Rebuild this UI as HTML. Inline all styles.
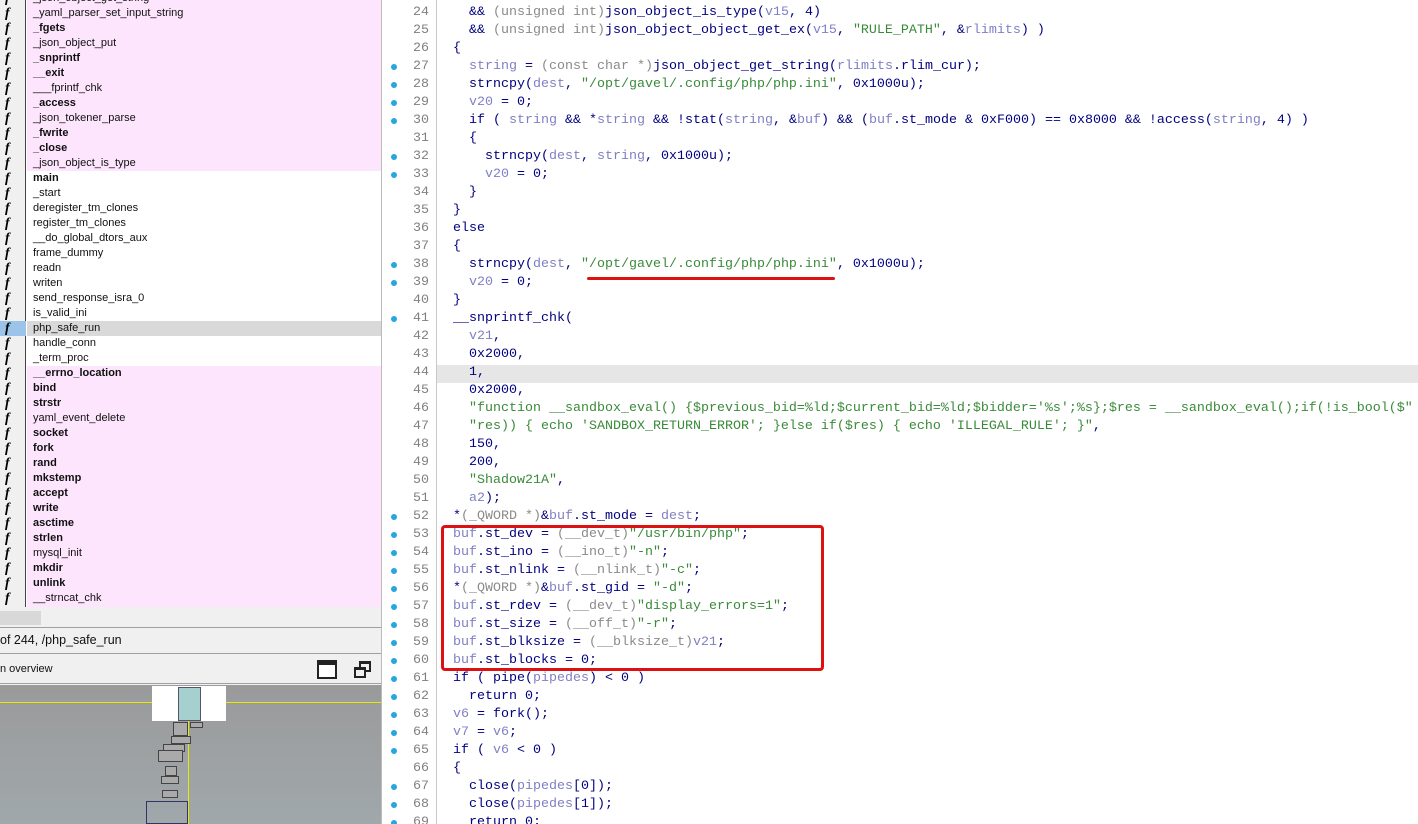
<!DOCTYPE html>
<html><head><meta charset="utf-8"><style>
*{margin:0;padding:0;box-sizing:border-box}
body{width:1418px;height:824px;overflow:hidden;background:#fff;font-family:"Liberation Sans",sans-serif;position:relative}
#left{position:absolute;left:0;top:0;width:381px;height:824px;background:#f0f0f0;overflow:hidden}
#list{position:absolute;left:0;top:0;width:381px;height:607px;overflow:hidden;background:#fff}
.icons{position:absolute;left:0;top:0;width:26px;height:607px;background:#f0f0f0;border-right:1px solid #444}
.row{position:absolute;left:27px;width:354px;height:15px;font-size:11px;line-height:15px;padding-left:6px;color:#111;white-space:nowrap}
.p{background:#fde6fd}
.b{font-weight:bold}
.sel{background:#d9d9d9}
.ic{position:absolute;left:5px;width:16px;height:15px;font:italic bold 14px/15px "Liberation Serif",serif;color:#000}
#right{position:absolute;left:381px;top:0;width:1037px;height:824px;border-left:1px solid #bbb;overflow:hidden;background:#fff}
.gut{position:absolute;left:54px;top:0;width:1px;height:824px;background:#c8c8c8}
.ln{position:absolute;left:0;width:1037px;height:18px;font-family:"Liberation Mono",monospace;font-size:13.33px;line-height:18px;white-space:pre;color:#000080}
.num{position:absolute;left:14px;width:33px;text-align:right;color:#808080}
.code{position:absolute;left:71px}
.dot{position:absolute;left:9px;top:6px;width:6px;height:6px;border-radius:3px;background:#27a6e0}
.v{color:#7f7fc4}.s{color:#3a8a3a}.c{color:#8a8a8a}
.hl{background:#e6e6e6}
</style></head><body>
<div id="left">
<div id="list">
<div class="icons"></div>
<div class="row p" style="top:-9px">_json_object_get_string</div>
<div class="row p" style="top:6px">_yaml_parser_set_input_string</div>
<div class="row p b" style="top:21px">_fgets</div>
<div class="row p" style="top:36px">_json_object_put</div>
<div class="row p b" style="top:51px">_snprintf</div>
<div class="row p b" style="top:66px">__exit</div>
<div class="row p" style="top:81px">___fprintf_chk</div>
<div class="row p b" style="top:96px">_access</div>
<div class="row p" style="top:111px">_json_tokener_parse</div>
<div class="row p b" style="top:126px">_fwrite</div>
<div class="row p b" style="top:141px">_close</div>
<div class="row p" style="top:156px">_json_object_is_type</div>
<div class="row b" style="top:171px">main</div>
<div class="row" style="top:186px">_start</div>
<div class="row" style="top:201px">deregister_tm_clones</div>
<div class="row" style="top:216px">register_tm_clones</div>
<div class="row" style="top:231px">__do_global_dtors_aux</div>
<div class="row" style="top:246px">frame_dummy</div>
<div class="row" style="top:261px">readn</div>
<div class="row" style="top:276px">writen</div>
<div class="row" style="top:291px">send_response_isra_0</div>
<div class="row" style="top:306px">is_valid_ini</div>
<div class="row sel" style="top:321px">php_safe_run</div>
<div class="row" style="top:336px">handle_conn</div>
<div class="row" style="top:351px">_term_proc</div>
<div class="row p b" style="top:366px">__errno_location</div>
<div class="row p b" style="top:381px">bind</div>
<div class="row p b" style="top:396px">strstr</div>
<div class="row p" style="top:411px">yaml_event_delete</div>
<div class="row p b" style="top:426px">socket</div>
<div class="row p b" style="top:441px">fork</div>
<div class="row p b" style="top:456px">rand</div>
<div class="row p b" style="top:471px">mkstemp</div>
<div class="row p b" style="top:486px">accept</div>
<div class="row p b" style="top:501px">write</div>
<div class="row p b" style="top:516px">asctime</div>
<div class="row p b" style="top:531px">strlen</div>
<div class="row p" style="top:546px">mysql_init</div>
<div class="row p b" style="top:561px">mkdir</div>
<div class="row p b" style="top:576px">unlink</div>
<div class="row p" style="top:591px">__strncat_chk</div>
<div class="row p" style="top:606px">_</div>
<div style="position:absolute;left:0;top:321px;width:26px;height:15px;background:#9cc4e8"></div>
<div class="ic" style="top:-9px">f</div><div class="ic" style="top:6px">f</div><div class="ic" style="top:21px">f</div><div class="ic" style="top:36px">f</div><div class="ic" style="top:51px">f</div><div class="ic" style="top:66px">f</div><div class="ic" style="top:81px">f</div><div class="ic" style="top:96px">f</div><div class="ic" style="top:111px">f</div><div class="ic" style="top:126px">f</div><div class="ic" style="top:141px">f</div><div class="ic" style="top:156px">f</div><div class="ic" style="top:171px">f</div><div class="ic" style="top:186px">f</div><div class="ic" style="top:201px">f</div><div class="ic" style="top:216px">f</div><div class="ic" style="top:231px">f</div><div class="ic" style="top:246px">f</div><div class="ic" style="top:261px">f</div><div class="ic" style="top:276px">f</div><div class="ic" style="top:291px">f</div><div class="ic" style="top:306px">f</div><div class="ic" style="top:321px">f</div><div class="ic" style="top:336px">f</div><div class="ic" style="top:351px">f</div><div class="ic" style="top:366px">f</div><div class="ic" style="top:381px">f</div><div class="ic" style="top:396px">f</div><div class="ic" style="top:411px">f</div><div class="ic" style="top:426px">f</div><div class="ic" style="top:441px">f</div><div class="ic" style="top:456px">f</div><div class="ic" style="top:471px">f</div><div class="ic" style="top:486px">f</div><div class="ic" style="top:501px">f</div><div class="ic" style="top:516px">f</div><div class="ic" style="top:531px">f</div><div class="ic" style="top:546px">f</div><div class="ic" style="top:561px">f</div><div class="ic" style="top:576px">f</div><div class="ic" style="top:591px">f</div>
</div>
<div style="position:absolute;left:0;top:610px;width:381px;height:17px;background:#f0f0f0"></div>
<div style="position:absolute;left:0;top:611px;width:41px;height:14px;background:#d8d8d8"></div>
<div style="position:absolute;left:0;top:627px;width:381px;height:1px;background:#a0a0a0"></div>
<div style="position:absolute;left:0;top:628px;width:381px;height:25px;font-size:12.5px;line-height:25px;color:#111">of 244, /php_safe_run</div>
<div style="position:absolute;left:0;top:653px;width:381px;height:1px;background:#a0a0a0"></div>
<div style="position:absolute;left:0;top:655px;width:381px;height:28px;font-size:11px;line-height:28px;color:#111">n overview</div>
<div style="position:absolute;left:317px;top:660px;width:20px;height:19px;border:2px solid #222;border-top-width:5px;background:#fff"></div>
<div style="position:absolute;left:359px;top:661px;width:12px;height:11px;border:2px solid #222;border-top-width:3px"></div>
<div style="position:absolute;left:354px;top:667px;width:12px;height:11px;border:2px solid #222;border-top-width:3px;background:#f0f0f0"></div>
<div style="position:absolute;left:0;top:683px;width:381px;height:1px;background:#a0a0a0"></div>
<div style="position:absolute;left:0;top:685px;width:381px;height:139px;background:linear-gradient(#9a9a9a,#a0a8ab)"></div>
<div style="position:absolute;left:0;top:702px;width:381px;height:1px;background:#e8e800"></div>
<div style="position:absolute;left:152px;top:686px;width:74px;height:35px;background:#fff"></div>
<div style="position:absolute;left:178px;top:687px;width:23px;height:34px;background:#a6d0d0;border:1px solid #556"></div>
<div style="position:absolute;left:188px;top:721px;width:1px;height:103px;background:#e8e800"></div>
<div style="position:absolute;left:173px;top:722px;width:15px;height:14px;border:1px solid #444;background:#aaa"></div>
<div style="position:absolute;left:190px;top:722px;width:13px;height:6px;border:1px solid #444;background:#aaa"></div>
<div style="position:absolute;left:171px;top:736px;width:20px;height:8px;border:1px solid #444;background:#aaa"></div>
<div style="position:absolute;left:163px;top:744px;width:22px;height:8px;border:1px solid #444;background:#aaa"></div>
<div style="position:absolute;left:158px;top:750px;width:25px;height:12px;border:1px solid #444;background:#aaa"></div>
<div style="position:absolute;left:165px;top:766px;width:12px;height:10px;border:1px solid #444;background:#aaa"></div>
<div style="position:absolute;left:161px;top:776px;width:18px;height:8px;border:1px solid #444;background:#aaa"></div>
<div style="position:absolute;left:162px;top:790px;width:16px;height:8px;border:1px solid #444;background:#aaa"></div>
<div style="position:absolute;left:146px;top:801px;width:42px;height:23px;border:1px solid #336"></div>
</div>

<div id="right">
<div class="gut"></div>
<div class="ln hl" style="top:365px;left:55px"></div>
<div style="position:absolute;left:59px;top:525px;width:383px;height:146px;border:3px solid #dd1111;border-radius:4px;z-index:2"></div>
<div style="position:absolute;left:205px;top:277px;width:248px;height:3px;background:#dd1111;border-radius:2px;z-index:2"></div>

<div class="ln" style="top:-14px"><span class="num">23</span><span class="code">  (</span></div>
<div class="ln" style="top:4px"><span class="num">24</span><span class="code">  &amp;&amp; <span class="c">(unsigned int)</span>json_object_is_type(<span class="v">v15</span>, 4)</span></div>
<div class="ln" style="top:22px"><span class="num">25</span><span class="code">  &amp;&amp; <span class="c">(unsigned int)</span>json_object_object_get_ex(<span class="v">v15</span>, <span class="s">"RULE_PATH"</span>, &amp;<span class="v">rlimits</span>) )</span></div>
<div class="ln" style="top:40px"><span class="num">26</span><span class="code">{</span></div>
<div class="ln" style="top:58px"><i class="dot"></i><span class="num">27</span><span class="code">  <span class="v">string</span> = <span class="c">(const char *)</span>json_object_get_string(<span class="v">rlimits</span>.rlim_cur);</span></div>
<div class="ln" style="top:76px"><i class="dot"></i><span class="num">28</span><span class="code">  strncpy(<span class="v">dest</span>, <span class="s">"/opt/gavel/.config/php/php.ini"</span>, 0x1000u);</span></div>
<div class="ln" style="top:94px"><i class="dot"></i><span class="num">29</span><span class="code">  <span class="v">v20</span> = 0;</span></div>
<div class="ln" style="top:112px"><i class="dot"></i><span class="num">30</span><span class="code">  if ( <span class="v">string</span> &amp;&amp; *<span class="v">string</span> &amp;&amp; !stat(<span class="v">string</span>, &amp;<span class="v">buf</span>) &amp;&amp; (<span class="v">buf</span>.st_mode &amp; 0xF000) == 0x8000 &amp;&amp; !access(<span class="v">string</span>, 4) )</span></div>
<div class="ln" style="top:130px"><span class="num">31</span><span class="code">  {</span></div>
<div class="ln" style="top:148px"><i class="dot"></i><span class="num">32</span><span class="code">    strncpy(<span class="v">dest</span>, <span class="v">string</span>, 0x1000u);</span></div>
<div class="ln" style="top:166px"><i class="dot"></i><span class="num">33</span><span class="code">    <span class="v">v20</span> = 0;</span></div>
<div class="ln" style="top:184px"><span class="num">34</span><span class="code">  }</span></div>
<div class="ln" style="top:202px"><span class="num">35</span><span class="code">}</span></div>
<div class="ln" style="top:220px"><span class="num">36</span><span class="code">else</span></div>
<div class="ln" style="top:238px"><span class="num">37</span><span class="code">{</span></div>
<div class="ln" style="top:256px"><i class="dot"></i><span class="num">38</span><span class="code">  strncpy(<span class="v">dest</span>, <span class="s">"/opt/gavel/.config/php/php.ini"</span>, 0x1000u);</span></div>
<div class="ln" style="top:274px"><i class="dot"></i><span class="num">39</span><span class="code">  <span class="v">v20</span> = 0;</span></div>
<div class="ln" style="top:292px"><span class="num">40</span><span class="code">}</span></div>
<div class="ln" style="top:310px"><i class="dot"></i><span class="num">41</span><span class="code">__snprintf_chk(</span></div>
<div class="ln" style="top:328px"><span class="num">42</span><span class="code">  <span class="v">v21</span>,</span></div>
<div class="ln" style="top:346px"><span class="num">43</span><span class="code">  0x2000,</span></div>
<div class="ln" style="top:364px"><span class="num">44</span><span class="code">  1,</span></div>
<div class="ln" style="top:382px"><span class="num">45</span><span class="code">  0x2000,</span></div>
<div class="ln" style="top:400px"><span class="num">46</span><span class="code">  <span class="s">"function __sandbox_eval() {$previous_bid=%ld;$current_bid=%ld;$bidder='%s';%s};$res = __sandbox_eval();if(!is_bool($"</span></span></div>
<div class="ln" style="top:418px"><span class="num">47</span><span class="code">  <span class="s">"res)) { echo 'SANDBOX_RETURN_ERROR'; }else if($res) { echo 'ILLEGAL_RULE'; }"</span>,</span></div>
<div class="ln" style="top:436px"><span class="num">48</span><span class="code">  150,</span></div>
<div class="ln" style="top:454px"><span class="num">49</span><span class="code">  200,</span></div>
<div class="ln" style="top:472px"><span class="num">50</span><span class="code">  <span class="s">"Shadow21A"</span>,</span></div>
<div class="ln" style="top:490px"><span class="num">51</span><span class="code">  <span class="v">a2</span>);</span></div>
<div class="ln" style="top:508px"><i class="dot"></i><span class="num">52</span><span class="code">*<span class="c">(_QWORD *)</span>&amp;<span class="v">buf</span>.st_mode = <span class="v">dest</span>;</span></div>
<div class="ln" style="top:526px"><i class="dot"></i><span class="num">53</span><span class="code"><span class="v">buf</span>.st_dev = <span class="c">(__dev_t)</span><span class="s">"/usr/bin/php"</span>;</span></div>
<div class="ln" style="top:544px"><i class="dot"></i><span class="num">54</span><span class="code"><span class="v">buf</span>.st_ino = <span class="c">(__ino_t)</span><span class="s">"-n"</span>;</span></div>
<div class="ln" style="top:562px"><i class="dot"></i><span class="num">55</span><span class="code"><span class="v">buf</span>.st_nlink = <span class="c">(__nlink_t)</span><span class="s">"-c"</span>;</span></div>
<div class="ln" style="top:580px"><i class="dot"></i><span class="num">56</span><span class="code">*<span class="c">(_QWORD *)</span>&amp;<span class="v">buf</span>.st_gid = <span class="s">"-d"</span>;</span></div>
<div class="ln" style="top:598px"><i class="dot"></i><span class="num">57</span><span class="code"><span class="v">buf</span>.st_rdev = <span class="c">(__dev_t)</span><span class="s">"display_errors=1"</span>;</span></div>
<div class="ln" style="top:616px"><i class="dot"></i><span class="num">58</span><span class="code"><span class="v">buf</span>.st_size = <span class="c">(__off_t)</span><span class="s">"-r"</span>;</span></div>
<div class="ln" style="top:634px"><i class="dot"></i><span class="num">59</span><span class="code"><span class="v">buf</span>.st_blksize = <span class="c">(__blksize_t)</span><span class="v">v21</span>;</span></div>
<div class="ln" style="top:652px"><i class="dot"></i><span class="num">60</span><span class="code"><span class="v">buf</span>.st_blocks = 0;</span></div>
<div class="ln" style="top:670px"><i class="dot"></i><span class="num">61</span><span class="code">if ( pipe(<span class="v">pipedes</span>) &lt; 0 )</span></div>
<div class="ln" style="top:688px"><i class="dot"></i><span class="num">62</span><span class="code">  return 0;</span></div>
<div class="ln" style="top:706px"><i class="dot"></i><span class="num">63</span><span class="code"><span class="v">v6</span> = fork();</span></div>
<div class="ln" style="top:724px"><i class="dot"></i><span class="num">64</span><span class="code"><span class="v">v7</span> = <span class="v">v6</span>;</span></div>
<div class="ln" style="top:742px"><i class="dot"></i><span class="num">65</span><span class="code">if ( <span class="v">v6</span> &lt; 0 )</span></div>
<div class="ln" style="top:760px"><span class="num">66</span><span class="code">{</span></div>
<div class="ln" style="top:778px"><i class="dot"></i><span class="num">67</span><span class="code">  close(<span class="v">pipedes</span>[0]);</span></div>
<div class="ln" style="top:796px"><i class="dot"></i><span class="num">68</span><span class="code">  close(<span class="v">pipedes</span>[1]);</span></div>
<div class="ln" style="top:814px"><i class="dot"></i><span class="num">69</span><span class="code">  return 0;</span></div>
</div>
</body></html>
